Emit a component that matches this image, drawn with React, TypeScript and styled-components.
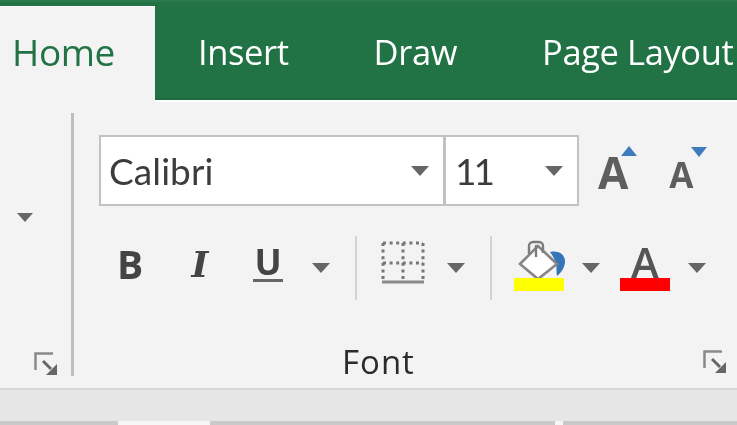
import React from "react";
import styled, { createGlobalStyle } from "styled-components";

const GlobalStyle = createGlobalStyle`
  html, body {
    margin: 0;
    padding: 0;
    background: #f3f3f3;
    overflow: hidden;
  }
`;

const Window = styled.div`
  width: 737px;
  height: 425px;
  overflow: hidden;
  display: flex;
  flex-direction: column;
  font-family: "Open Sans", "Liberation Sans", sans-serif;
  filter: blur(0.6px);
`;

const TabBar = styled.div`
  height: 100px;
  flex: none;
  display: flex;
  align-items: flex-start;
  gap: 85px;
  background: #217346;
  border-top: 2px solid #2a7a4e;
  border-bottom: 2px solid #1e6b40;
  box-sizing: border-box;
  white-space: nowrap;
`;

const Tab = styled.div`
  height: 98px;
  flex: none;
  display: flex;
  align-items: center;
  font-size: 34.5px;
  letter-spacing: -0.4px;
  color: #ffffff;
`;

// the selected tab runs over the bar's bottom edge into the ribbon
const ActiveTab = styled(Tab)`
  position: relative;
  z-index: 1;
  box-sizing: border-box;
  width: 155px;
  height: 98px;
  margin: 4px -42px 0 0;
  padding: 0 0 8px 12px;
  font-size: 37px;
  color: #217346;
  background: #f3f3f3;
  border-top: 1px solid #fbfbfb;
`;

const Ribbon = styled.div`
  height: 288px;
  flex: none;
  display: flex;
  background: #f3f3f3;
  border-top: 2px solid #ffffff;
  box-sizing: border-box;
`;

const LeftGroup = styled.div`
  flex: none;
  margin: 11px 0 12px;
  padding-right: 13px;
  width: 58px;
  display: flex;
  flex-direction: column;
  align-items: flex-end;
  justify-content: flex-end;
  border-right: 3px solid #bdbdbd;
`;

const LeftCaret = styled.div`
  margin: 0 25px 130px 0;
  width: 0;
  height: 0;
  border-left: 8px solid transparent;
  border-right: 8px solid transparent;
  border-top: 9px solid #666;
`;

const FontGroup = styled.div`
  flex: 1;
  display: flex;
  flex-direction: column;
  padding: 33px 10px 0 25px;
  min-width: 0;
`;

const ComboRow = styled.div`
  height: 71px;
  display: flex;
  align-items: stretch;
`;

const Combo = styled.div<{ $width: number }>`
  width: ${({ $width }) => $width}px;
  box-sizing: border-box;
  display: flex;
  align-items: center;
  justify-content: space-between;
  padding: 0 14px 0 8px;
  background: #fff;
  border: 2px solid #c2c2c2;
  font-family: "Lato", "Liberation Sans", sans-serif;
  font-size: 37px;
  letter-spacing: 0.1px;
  color: #3c3c3c;
  & + & {
    margin-left: -1px;
    padding-left: 9px;
    letter-spacing: -3px;
  }
`;

const Caret = styled.span<{ $left?: number }>`
  flex: none;
  width: 0;
  height: 0;
  margin-left: ${({ $left }) => $left ?? 0}px;
  border-left: 9px solid transparent;
  border-right: 9px solid transparent;
  border-top: 10px solid #666;
`;

const SizeButton = styled.div<{ $left: number; $size: number; $top: number }>`
  position: relative;
  margin: ${({ $top }) => $top}px 0 0 ${({ $left }) => $left}px;
  align-self: center;
  font-size: ${({ $size }) => $size}px;
  line-height: 1;
  font-weight: 700;
  color: #5e5e5e;
`;

const SizeArrow = styled.span<{ $down?: boolean }>`
  position: absolute;
  top: ${({ $down }) => ($down ? "-10px" : "-4px")};
  left: 100%;
  margin-left: ${({ $down }) => ($down ? "-3px" : "-7px")};
  width: 0;
  height: 0;
  border-left: 8px solid transparent;
  border-right: 8px solid transparent;
  ${({ $down }) =>
    $down ? "border-top: 10px solid #3f7cbf;" : "border-bottom: 10px solid #3f7cbf;"}
`;

const ToolRow = styled.div`
  height: 64px;
  margin-top: 30px;
  padding-left: 6px;
  display: flex;
  align-items: center;
`;

const ToolButton = styled.div<{ $left?: number; $font?: string; $size?: number }>`
  width: 50px;
  flex: none;
  margin-left: ${({ $left }) => $left ?? 0}px;
  margin-bottom: 9px;
  display: flex;
  justify-content: center;
  font-size: ${({ $size }) => $size ?? 39}px;
  line-height: 1;
  font-weight: 700;
  color: #444;
  font-family: ${({ $font }) => $font ?? "inherit"};
`;

const Underlined = styled.span`
  font-weight: 700;
  line-height: 34px;
  font-size: 36px;
  border-bottom: 3px solid #666;
  padding: 0 1px;
`;

const Divider = styled.div<{ $left: number }>`
  width: 2px;
  align-self: stretch;
  flex: none;
  margin-left: ${({ $left }) => $left}px;
  background: #d2d2d2;
`;

const IconSlot = styled.div<{ $left: number; $width: number }>`
  flex: none;
  width: ${({ $width }) => $width}px;
  height: 50px;
  margin-left: ${({ $left }) => $left}px;
  margin-bottom: 4px;
  & > svg {
    display: block;
    overflow: visible;
  }
`;

const ColorA = styled.div`
  height: 50px;
  display: flex;
  flex-direction: column;
  align-items: center;
  justify-content: flex-end;
  font-size: 42px;
  line-height: 32px;
  font-weight: 600;
  color: #555;
`;

const ColorBar = styled.div<{ $color: string }>`
  width: 50px;
  height: 13px;
  flex: none;
  background: ${({ $color }) => $color};
`;

const GroupFooter = styled.div`
  margin-top: 44px;
  display: flex;
  align-items: center;
  height: 36px;
`;

const GroupLabel = styled.div`
  margin-left: 243px;
  font-size: 33px;
  font-weight: 500;
  line-height: 36px;
  letter-spacing: 1px;
  color: #2b2b2b;
`;

const LauncherIcon = styled.svg`
  display: block;
  flex: none;
`;

const FooterEnd = styled.div`
  margin-left: auto;
`;

const StatusGap = styled.div`
  flex: 1;
  display: flex;
  flex-direction: column;
  justify-content: flex-end;
  background: #e6e6e6;
  border-top: 2px solid #d6d6d6;
`;

const SheetEdge = styled.div`
  height: 4px;
  display: flex;
`;

const EdgePiece = styled.div<{ $width?: number; $open?: boolean }>`
  ${({ $width }) => ($width ? `width: ${$width}px; flex: none;` : "flex: 1;")}
  background: ${({ $open }) => ($open ? "#f6f6f6" : "#c9c9c9")};
`;

const Launcher = () => (
  <LauncherIcon width="24" height="24" viewBox="0 0 24 24">
    <path d="M1.5 18V1.5H19" fill="none" stroke="#8a8a8a" strokeWidth="2.5" />
    <path d="M9 9l8 8" stroke="#666" strokeWidth="3" />
    <path d="M23 12v11H12z" fill="#666" />
  </LauncherIcon>
);

const BordersIcon = () => (
  <svg width="42" height="46" viewBox="0 0 42 46">
    <g fill="none" stroke="#777" strokeWidth="3" strokeDasharray="3 3.6">
      <path d="M1 2h40M1 22h40M1 2v38M21 2v38M41 2v38" />
    </g>
    <path d="M0 41h42" stroke="#8a8a8a" strokeWidth="3" />
  </svg>
);

const FillIcon = () => (
  <svg width="50" height="50" viewBox="0 0 50 50">
    <path d="M36 11c9-2 15 3 15 9 0 6-3 11-8 15-1-4 0-8-1-12-1-4-3-8-6-12z" fill="#3574b8" />
    <path d="M6 23L24 5l19 18-19 15z" fill="#fff" stroke="#858585" strokeWidth="2.6" />
    <path
      d="M15 13V5a4 4 0 0 1 4-4h6a4 4 0 0 1 4 4v7M22 4v12"
      fill="none"
      stroke="#7d7d7d"
      strokeWidth="2.4"
    />
    <rect x="0" y="37" width="50" height="13" fill="#ffff00" />
  </svg>
);

export default function App() {
  return (
    <Window>
      <GlobalStyle />
      <TabBar>
        <ActiveTab>Home</ActiveTab>
        <Tab>Insert</Tab>
        <Tab>Draw</Tab>
        <Tab>Page Layout</Tab>
      </TabBar>
      <Ribbon>
        <LeftGroup>
          <LeftCaret />
          <Launcher />
        </LeftGroup>
        <FontGroup>
          <ComboRow>
            <Combo $width={346}>
              Calibri
              <Caret />
            </Combo>
            <Combo $width={135}>
              11
              <Caret />
            </Combo>
            <SizeButton $left={19} $size={44} $top={3}>
              A
              <SizeArrow />
            </SizeButton>
            <SizeButton $left={41} $size={35} $top={8}>
              A
              <SizeArrow $down />
            </SizeButton>
          </ComboRow>
          <ToolRow>
            <ToolButton>B</ToolButton>
            <ToolButton $left={20} $font={'"DejaVu Serif", serif'} $size={36}>
              <i>I</i>
            </ToolButton>
            <ToolButton $left={18}>
              <Underlined>U</Underlined>
            </ToolButton>
            <Caret $left={19} />
            <Divider $left={25} />
            <IconSlot $left={25} $width={42}>
              <BordersIcon />
            </IconSlot>
            <Caret $left={23} />
            <Divider $left={25} />
            <IconSlot $left={22} $width={50}>
              <FillIcon />
            </IconSlot>
            <Caret $left={18} />
            <IconSlot $left={20} $width={50}>
              <ColorA>
                A
                <ColorBar $color="#ff0000" />
              </ColorA>
            </IconSlot>
            <Caret $left={18} />
          </ToolRow>
          <GroupFooter>
            <GroupLabel>Font</GroupLabel>
            <FooterEnd>
              <Launcher />
            </FooterEnd>
          </GroupFooter>
        </FontGroup>
      </Ribbon>
      <StatusGap>
        <SheetEdge>
          <EdgePiece $width={118} />
          <EdgePiece $width={92} $open />
          <EdgePiece $width={345} />
          <EdgePiece $width={8} $open />
          <EdgePiece />
        </SheetEdge>
      </StatusGap>
    </Window>
  );
}
